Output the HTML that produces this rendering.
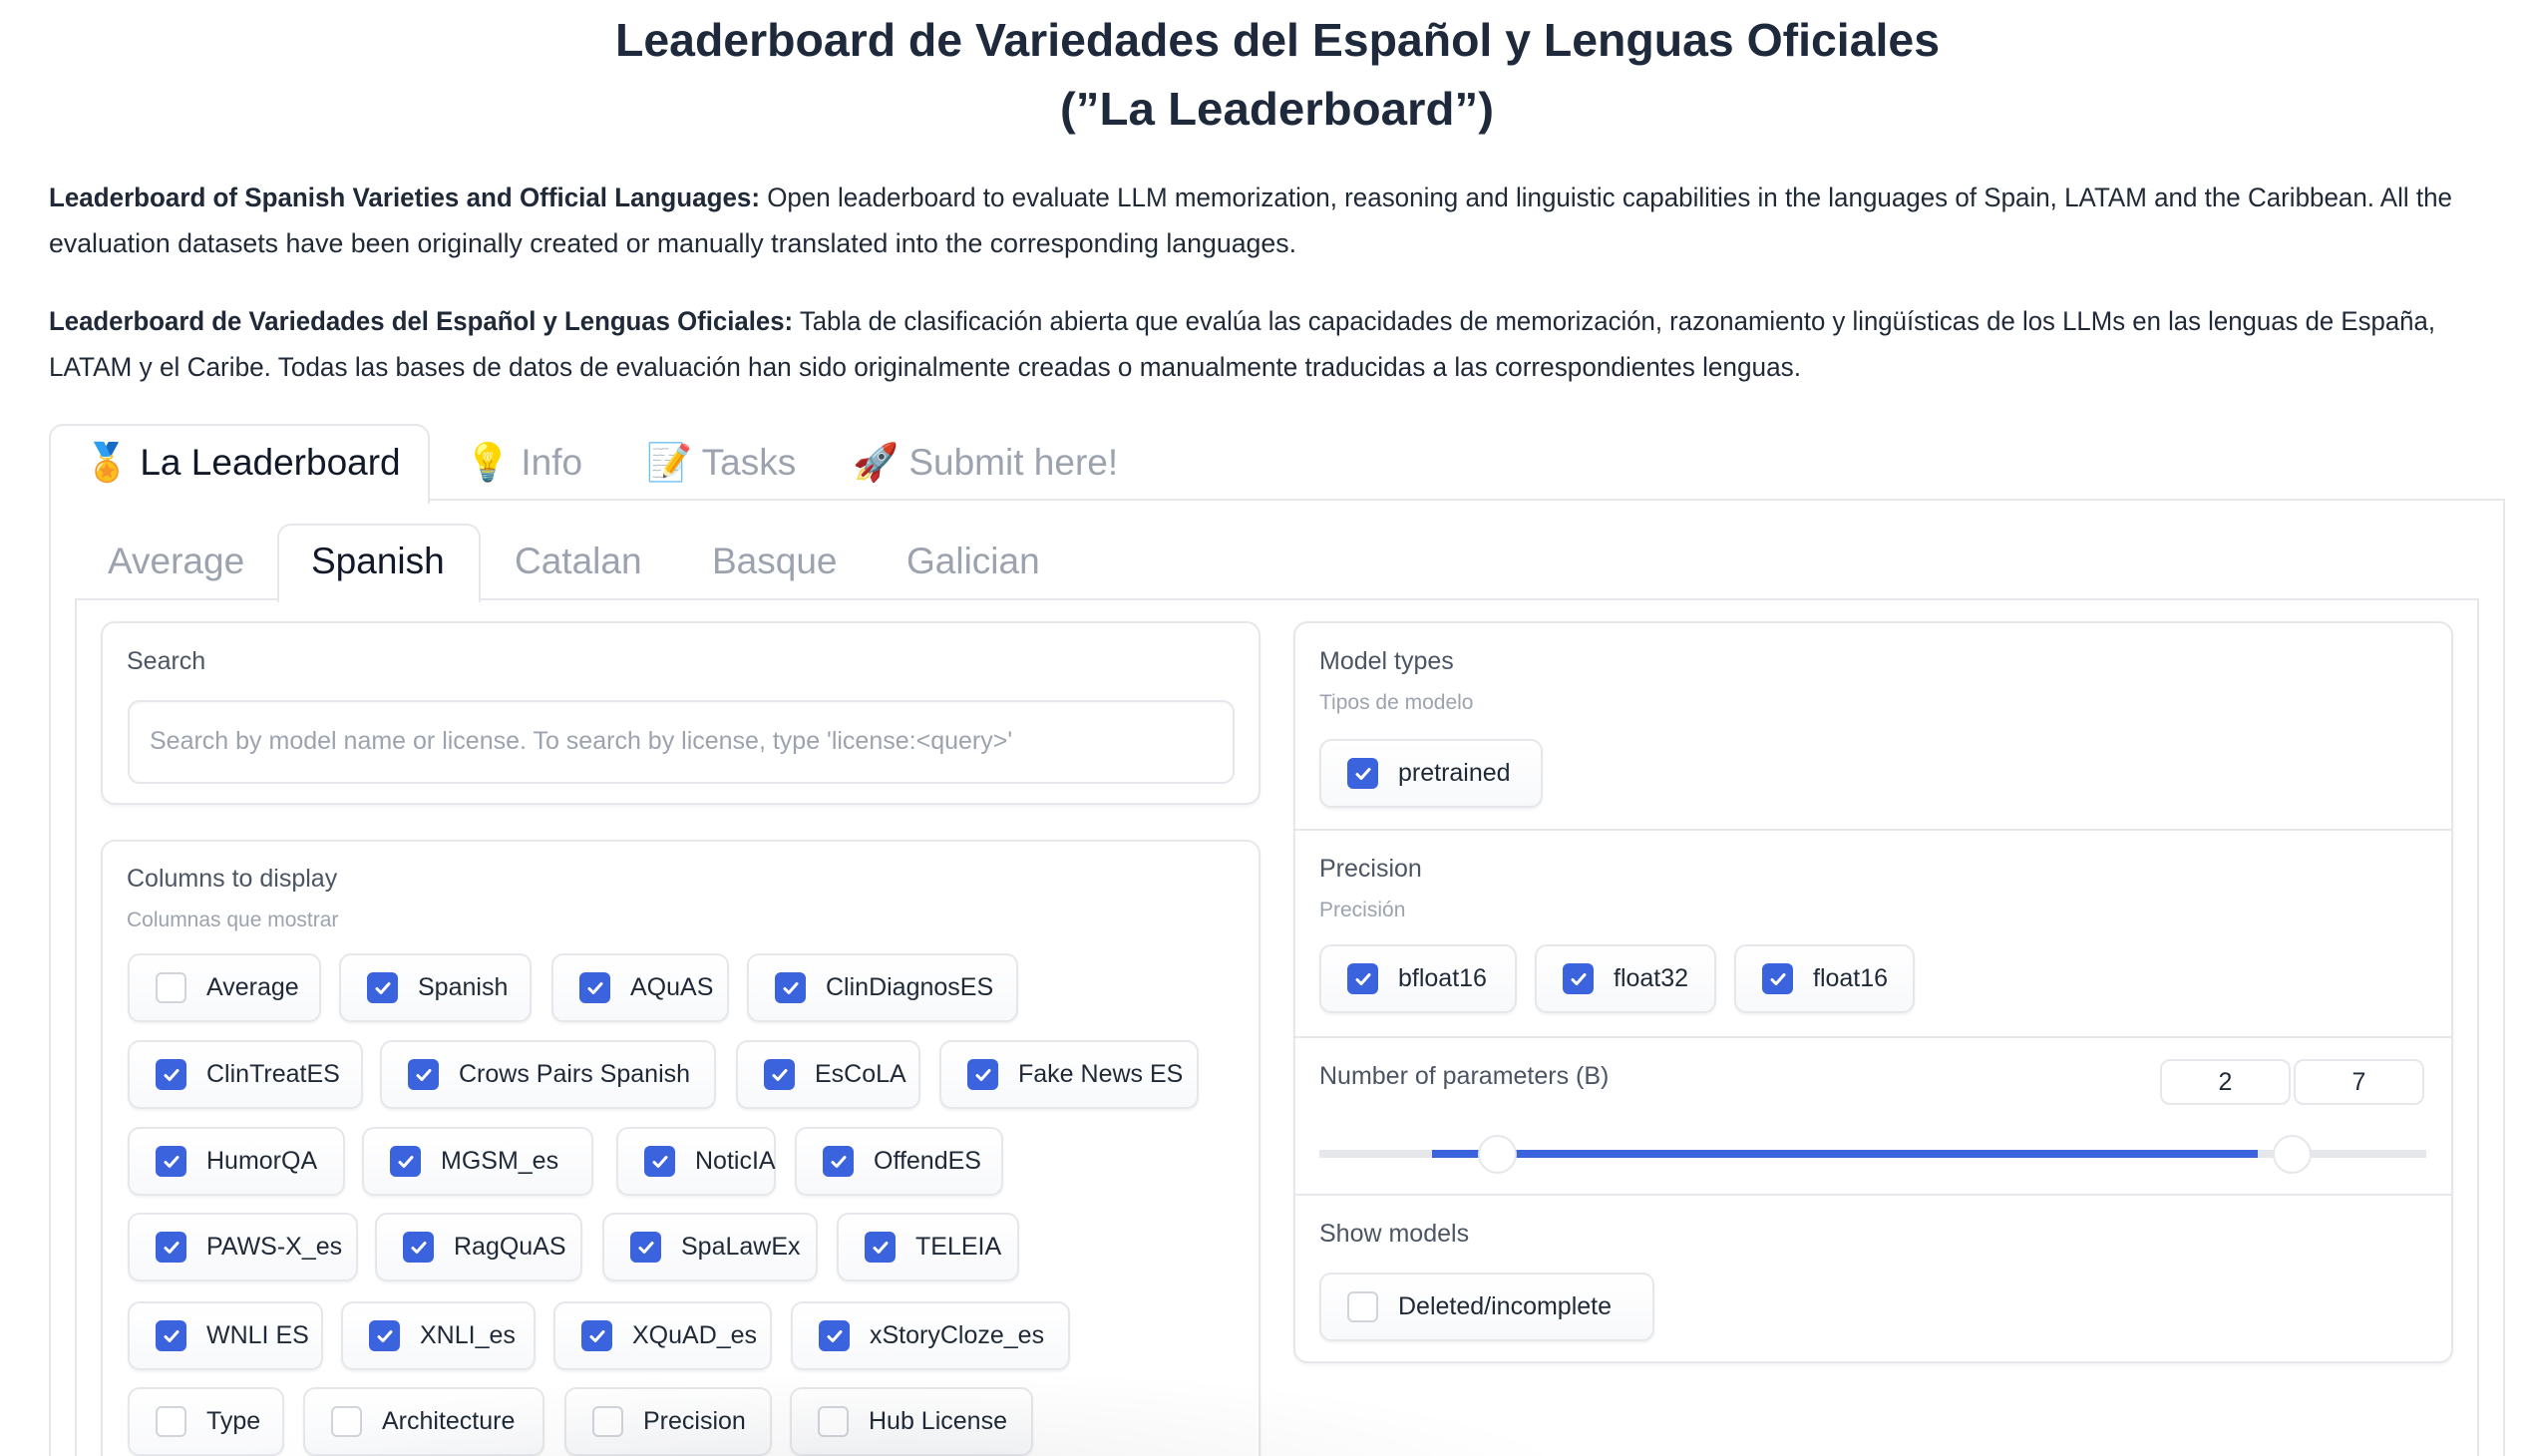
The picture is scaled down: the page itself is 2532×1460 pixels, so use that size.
<!DOCTYPE html>
<html style="width:2532px;height:1460px;overflow:hidden"><head><meta charset="utf-8"><style>
*{box-sizing:border-box;margin:0;padding:0}
body{width:2532px;height:1460px;background:#fff;font-family:"Liberation Sans","Noto Sans CJK JP",sans-serif;color:#1f2937;position:relative;overflow:hidden}
.abs{position:absolute}
svg text{font-family:"Liberation Sans",sans-serif}
.tab{position:absolute;font-size:37px;color:#9ca3af;white-space:nowrap}
.box{position:absolute;border:2px solid #e5e7eb;border-radius:14px;background:#fff;box-shadow:0 2px 3px rgba(0,0,0,.05)}
.lbl{position:absolute;font-size:25px;color:#4b5563;white-space:nowrap}
.sub{position:absolute;font-size:21px;color:#9ca3af;white-space:nowrap}
.chip{position:absolute;height:69px;border:2px solid #e5e7eb;border-radius:12px;background:linear-gradient(#fff,#f8f9fb);box-shadow:0 2px 2px rgba(0,0,0,.05);font-size:25px;color:#1f2937;white-space:nowrap;display:flex;align-items:center;padding-left:26px}
.cb{width:31px;height:31px;border-radius:6px;margin-right:20px;flex:none;display:flex;align-items:center;justify-content:center}
.on{background:#3b63dd}
.off{border:2px solid #d1d5db;background:#fff}
.hr{position:absolute;height:2px;background:#e5e7eb}
</style></head><body>

<svg class="abs" style="left:0;top:0" width="2532" height="400">
<text x="617" y="56" font-size="46" font-weight="bold" fill="#1e293b" textLength="1328" lengthAdjust="spacingAndGlyphs">Leaderboard de Variedades del Español y Lenguas Oficiales</text>
<text x="1063" y="125" font-size="46" font-weight="bold" fill="#1e293b" textLength="435" lengthAdjust="spacingAndGlyphs">(”La Leaderboard”)</text>
<text x="49" y="207" font-size="27" fill="#1f2937" textLength="2410" lengthAdjust="spacingAndGlyphs"><tspan font-weight="bold">Leaderboard of Spanish Varieties and Official Languages:</tspan> Open leaderboard to evaluate LLM memorization, reasoning and linguistic capabilities in the languages of Spain, LATAM and the Caribbean. All the</text>
<text x="49" y="253" font-size="27" fill="#1f2937" textLength="1251" lengthAdjust="spacingAndGlyphs">evaluation datasets have been originally created or manually translated into the corresponding languages.</text>
<text x="49" y="331" font-size="27" fill="#1f2937" textLength="2393" lengthAdjust="spacingAndGlyphs"><tspan font-weight="bold">Leaderboard de Variedades del Español y Lenguas Oficiales:</tspan> Tabla de clasificación abierta que evalúa las capacidades de memorización, razonamiento y lingüísticas de los LLMs en las lenguas de España,</text>
<text x="49" y="377" font-size="27" fill="#1f2937" textLength="1757" lengthAdjust="spacingAndGlyphs">LATAM y el Caribe. Todas las bases de datos de evaluación han sido originalmente creadas o manualmente traducidas a las correspondientes lenguas.</text>
</svg>

<div class="abs" style="left:49px;top:500px;width:2463px;height:960px;border:2px solid #e5e7eb;border-bottom:none"></div>
<div class="abs" style="left:49px;top:425px;width:382px;height:80px;border:2px solid #e5e7eb;border-bottom:none;border-radius:14px 14px 0 0;background:#fff"></div>
<div class="tab" style="left:84px;top:443px;color:#111827">🏅 La Leaderboard</div>
<div class="tab" style="left:466px;top:443px">💡 Info</div>
<div class="tab" style="left:648px;top:443px">📝 Tasks</div>
<div class="tab" style="left:855px;top:443px">🚀 Submit here!</div>

<div class="abs" style="left:75px;top:600px;width:2411px;height:860px;border:2px solid #e5e7eb;border-bottom:none"></div>
<div class="abs" style="left:278px;top:525px;width:204px;height:79px;border:2px solid #e5e7eb;border-bottom:none;border-radius:14px 14px 0 0;background:#fff"></div>
<div class="tab" style="left:108px;top:542px">Average</div>
<div class="tab" style="left:312px;top:542px;color:#111827">Spanish</div>
<div class="tab" style="left:516px;top:542px">Catalan</div>
<div class="tab" style="left:714px;top:542px">Basque</div>
<div class="tab" style="left:909px;top:542px">Galician</div>

<div class="box" style="left:101px;top:623px;width:1163px;height:184px"></div>
<div class="lbl" style="left:127px;top:649px">Search</div>
<div class="abs" style="left:128px;top:702px;width:1110px;height:84px;border:2px solid #e5e7eb;border-radius:12px;box-shadow:inset 0 1px 2px rgba(0,0,0,.04)"></div>
<div class="lbl" style="left:150px;top:729px;color:#9ca3af">Search by model name or license. To search by license, type 'license:&lt;query&gt;'</div>

<div class="box" style="left:101px;top:842px;width:1163px;height:618px;border-bottom:none;border-radius:14px 14px 0 0"></div>
<div class="lbl" style="left:127px;top:867px">Columns to display</div>
<div class="sub" style="left:127px;top:911px">Columnas que mostrar</div>

<div class="box" style="left:1297px;top:623px;width:1163px;height:744px"></div>
<div class="lbl" style="left:1323px;top:649px">Model types</div>
<div class="sub" style="left:1323px;top:693px">Tipos de modelo</div>
<div class="hr" style="left:1299px;top:831px;width:1159px"></div>
<div class="lbl" style="left:1323px;top:857px">Precision</div>
<div class="sub" style="left:1323px;top:901px">Precisión</div>
<div class="hr" style="left:1299px;top:1039px;width:1159px"></div>
<div class="lbl" style="left:1323px;top:1065px">Number of parameters (B)</div>
<div class="abs" style="left:2166px;top:1062px;width:131px;height:46px;border:2px solid #e5e7eb;border-radius:10px;font-size:25px;text-align:center;line-height:42px">2</div>
<div class="abs" style="left:2300px;top:1062px;width:131px;height:46px;border:2px solid #e5e7eb;border-radius:10px;font-size:25px;text-align:center;line-height:42px">7</div>
<div class="abs" style="left:1323px;top:1153px;width:1110px;height:8px;background:#e5e7eb"></div>
<div class="abs" style="left:1436px;top:1153px;width:828px;height:8px;background:#3b63dd"></div>
<div class="abs" style="left:1482px;top:1138px;width:39px;height:39px;border-radius:50%;background:#fff;border:2px solid #e5e7eb"></div>
<div class="abs" style="left:2279px;top:1138px;width:39px;height:39px;border-radius:50%;background:#fff;border:2px solid #e5e7eb"></div>
<div class="hr" style="left:1299px;top:1197px;width:1159px"></div>
<div class="lbl" style="left:1323px;top:1223px">Show models</div>

<div id="chips"></div>

<div class="abs" style="left:0;top:1380px;width:2532px;height:80px;pointer-events:none;background:radial-gradient(ellipse 700px 120px at 900px 110px,rgba(0,0,0,.05),rgba(0,0,0,0))"></div>

<script>
const ck='<svg width="20" height="20" viewBox="0 0 20 20"><path d="M4 10.5l4 4 8-9" stroke="#fff" stroke-width="3" fill="none" stroke-linecap="round" stroke-linejoin="round"/></svg>';
const rows=[[991,[[128,194,'Average',0],[340,193,'Spanish',1],[553,178,'AQuAS',1],[749,272,'ClinDiagnosES',1]]],
[1078,[[128,236,'ClinTreatES',1],[381,337,'Crows Pairs Spanish',1],[738,185,'EsCoLA',1],[942,260,'Fake News ES',1]]],
[1165,[[128,218,'HumorQA',1],[363,232,'MGSM_es',1],[618,160,'NoticIA',1],[797,209,'OffendES',1]]],
[1251,[[128,231,'PAWS-X_es',1],[376,208,'RagQuAS',1],[604,216,'SpaLawEx',1],[839,183,'TELEIA',1]]],
[1340,[[128,196,'WNLI ES',1],[342,195,'XNLI_es',1],[555,219,'XQuAD_es',1],[793,280,'xStoryCloze_es',1]]],
[1426,[[128,157,'Type',0],[304,242,'Architecture',0],[566,208,'Precision',0],[792,244,'Hub License',0]]],
[776,[[1323,224,'pretrained',1]]],
[982,[[1323,198,'bfloat16',1],[1539,182,'float32',1],[1739,181,'float16',1]]],
[1311,[[1323,336,'Deleted/incomplete',0]]]];
let h='';
for(const [cy,cs] of rows)for(const [x,w,t,on] of cs){
h+=`<div class="chip" style="left:${x}px;top:${cy-35}px;width:${w}px"><div class="cb ${on?'on':'off'}">${on?ck:''}</div>${t}</div>`;}
document.getElementById('chips').outerHTML=h;
</script>
</body></html>
